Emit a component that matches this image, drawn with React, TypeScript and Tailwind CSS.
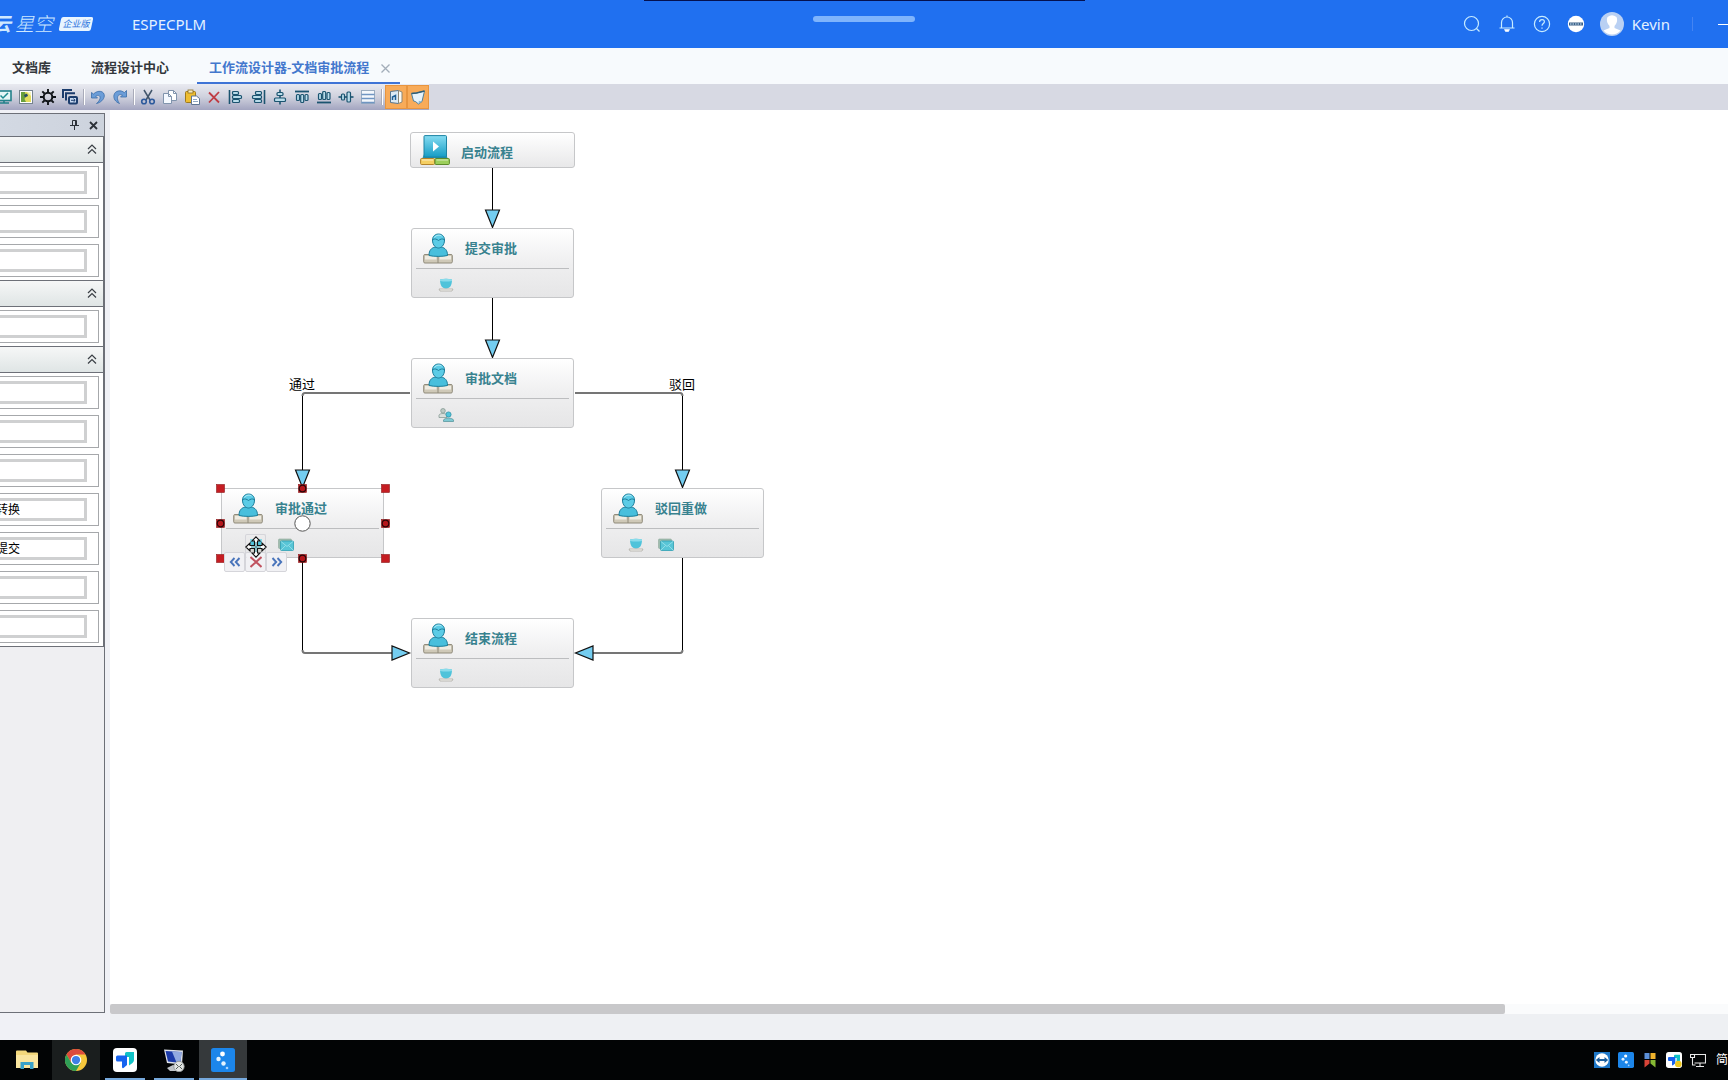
import React from "react";

const INK = "#1b5470";

/* ---------- Toolbar icons (16 x 16) ---------- */

function Icon({ children, size = 16 }: { children: React.ReactNode; size?: number }) {
  return (
    <svg width={size} height={size} viewBox="0 0 16 16" fill="none" aria-hidden="true" className="shrink-0">
      {children}
    </svg>
  );
}

const alignBar = { fill: "#b9dcea", stroke: INK, strokeWidth: 1.2 };

const MonitorIcon = (
  <Icon>
    <rect x="1" y="2" width="14" height="9.5" fill="#e6f6f6" stroke="#23818a" strokeWidth="1.6" />
    <path d="M4.5 6.5l2.5 2.5 5-5" stroke="#1d8b90" strokeWidth="1.5" />
    <path d="M3 14h10M8 11.5V14" stroke="#23818a" strokeWidth="1.6" />
  </Icon>
);
const MapIcon = (
  <Icon>
    <rect x="1.5" y="1.5" width="13" height="13" fill="#fff" stroke="#75838f" />
    <path d="M3 3h10v10H3z" fill="#e3dc5c" />
    <path d="M3 3h4l1 4-1.500 3L8 13H3z" fill="#6a9f3c" />
    <path d="M9 3h4v4z" fill="#f5f3c0" />
    <path d="M6 6l3-1.500 1 2.500-3 1.500z" fill="#284a68" />
  </Icon>
);
const GearIcon = (
  <Icon>
    <circle cx="8" cy="8" r="4.3" stroke="#101418" strokeWidth="2" />
    <path
      d="M8 0v3M8 13v3M0 8h3M13 8h3M2.3 2.3l2.2 2.2M11.5 11.5l2.2 2.2M2.3 13.7l2.2-2.2M11.5 4.5l2.2-2.2"
      stroke="#101418"
      strokeWidth="1.9"
    />
  </Icon>
);
const CascadeIcon = (
  <Icon>
    <path d="M1 9V1h9M4 11.5V4.200h9" stroke="#1c3d6d" strokeWidth="2" />
    <rect x="7" y="8" width="8" height="6.500" rx="1" fill="#c7d9f1" stroke="#1c3d6d" strokeWidth="2" />
    <path d="M9 11.300h4M11.500 9.700l1.700 1.600-1.700 1.600" stroke="#1c3d6d" />
  </Icon>
);
const UndoIcon = (
  <Icon>
    <path
      d="M1.500 3.500v5.500h6L5.700 7.200c2.500-1.700 5-.7 4.300 2.300-.4 2-1.700 3.500-3.500 5 4-.8 7.500-4 7.800-7.500C14.600 2 8 .5 3.500 5z"
      fill="#6b9dd8"
      stroke="#3b6da8"
      strokeWidth=".8"
    />
  </Icon>
);
const RedoIcon = (
  <Icon>
    <path
      d="M14.500 1.500V8h-6l2-2c-3-1.200-5.200.2-5 3.500.1 2 .8 3.500 2 5C3.500 13 1.200 9.500 2 6c1-4.500 7-5.500 10.300-2.300z"
      fill="#6b9dd8"
      stroke="#3b6da8"
      strokeWidth=".8"
    />
  </Icon>
);
const CutIcon = (
  <Icon>
    <path d="M4 1l6 10M12 1L6 11" stroke="#42566b" strokeWidth="1.500" />
    <circle cx="4" cy="12.500" r="2.300" stroke="#2d5a9c" strokeWidth="1.600" />
    <circle cx="12" cy="12.500" r="2.300" stroke="#2d5a9c" strokeWidth="1.600" />
  </Icon>
);
const CopyIcon = (
  <Icon>
    <path d="M6.500 1.500h5l3 3v7h-8z" fill="#fff" stroke="#8194ad" />
    <path d="M1.500 4.500h5l3 3v7h-8z" fill="#f5f9ff" stroke="#8194ad" />
    <path d="M6.500 4.500v3h3M11.500 1.500v3h3" stroke="#8194ad" />
  </Icon>
);
const PasteIcon = (
  <Icon>
    <rect x="1.500" y="2.500" width="10" height="11" rx="1" fill="#eebd31" stroke="#9f7a1d" />
    <rect x="4" y="1" width="5" height="3" fill="#f6ecc0" stroke="#8a6d20" strokeWidth=".8" />
    <path d="M7.500 7h5l3 2.500v6h-8z" fill="#fff" stroke="#5f7694" />
    <path d="M9 10.500h4M9 12.500h5" stroke="#90a8c4" />
  </Icon>
);
const DeleteIcon = (
  <Icon>
    <path d="M3 3.500l10 10M13 3L3 13.500" stroke="#bf3b43" strokeWidth="1.800" />
  </Icon>
);
const AlignLeftIcon = (
  <Icon>
    <path d="M1.500 1v14" stroke={INK} strokeWidth="1.600" />
    <rect x="4.500" y="2.500" width="6" height="3" rx="1" {...alignBar} />
    <rect x="4.500" y="6.500" width="9" height="3" rx="1" {...alignBar} />
    <rect x="4.500" y="10.500" width="7" height="3" rx="1" {...alignBar} />
  </Icon>
);
const AlignRightIcon = (
  <Icon>
    <path d="M14.500 1v14" stroke={INK} strokeWidth="1.600" />
    <rect x="5.500" y="2.500" width="6" height="3" rx="1" {...alignBar} />
    <rect x="2.500" y="6.500" width="9" height="3" rx="1" {...alignBar} />
    <rect x="4.500" y="10.500" width="7" height="3" rx="1" {...alignBar} />
  </Icon>
);
const AlignCenterIcon = (
  <Icon>
    <path d="M8 .5v15" stroke={INK} strokeWidth="1.600" />
    <rect x="5" y="3.500" width="6" height="3" rx="1" {...alignBar} />
    <rect x="2.500" y="9" width="11" height="3.500" rx="1" {...alignBar} />
  </Icon>
);
const AlignTopIcon = (
  <Icon>
    <path d="M1 2.500h14" stroke={INK} strokeWidth="1.800" />
    <rect x="2.500" y="5.500" width="3" height="6" rx="1" {...alignBar} />
    <rect x="6.700" y="5.500" width="3" height="8" rx="1" {...alignBar} />
    <rect x="11" y="5.500" width="3" height="6" rx="1" {...alignBar} />
  </Icon>
);
const AlignBottomIcon = (
  <Icon>
    <path d="M1 13.500h14" stroke={INK} strokeWidth="1.800" />
    <rect x="2.500" y="4.500" width="3" height="6" rx="1" {...alignBar} />
    <rect x="6.700" y="2.500" width="3" height="8" rx="1" {...alignBar} />
    <rect x="11" y="3.500" width="3" height="7" rx="1" {...alignBar} />
  </Icon>
);
const AlignMiddleIcon = (
  <Icon>
    <path d="M.5 8h15" stroke={INK} strokeWidth="1.600" />
    <rect x="3.500" y="5" width="3" height="6" rx="1" {...alignBar} />
    <rect x="9" y="3" width="3.500" height="10" rx="1" {...alignBar} />
  </Icon>
);
const ListIcon = (
  <Icon>
    <rect x="1.500" y="1.500" width="13" height="13" fill="#f4f8fc" stroke="#9aacc0" />
    <path d="M1.500 5.500h13M1.500 9.500h13M1.500 13.500h13" stroke="#6f95c2" strokeWidth="1.400" />
  </Icon>
);
const RulerIcon = (
  <Icon>
    <path d="M2.500 2.500l8-1v13l-8-1z" fill="#dceaf4" stroke="#56758f" />
    <path d="M10.500 1.500l3.500 1.500v10l-3.500 1.500z" fill="#fbfbf7" stroke="#8b8676" />
    <path d="M4.500 11V8l3-1.500V11" stroke="#1f5f95" strokeWidth="1.500" />
  </Icon>
);
const NoteIcon = (
  <Icon>
    <path d="M1.500 4.500l5-.5 8-2-2.500 10.500-3.500 2.500-3-2.500-2-.5z" fill="#e6f3fb" stroke="#4d7f9c" />
    <path d="M1.500 4.500l5-.5 8-2" stroke="#2f5f78" strokeWidth="1.400" />
    <path d="M8.500 15l.3-3.200 3.200.7z" fill="#8cb8d0" />
  </Icon>
);

type Tool = { label: string; icon: React.ReactNode; on?: boolean };
const toolGroups: Tool[][] = [
  [
    { label: "预览", icon: MonitorIcon },
    { label: "导航图", icon: MapIcon },
    { label: "设置", icon: GearIcon },
    { label: "层叠", icon: CascadeIcon },
  ],
  [
    { label: "撤销", icon: UndoIcon },
    { label: "重做", icon: RedoIcon },
  ],
  [
    { label: "剪切", icon: CutIcon },
    { label: "复制", icon: CopyIcon },
    { label: "粘贴", icon: PasteIcon },
    { label: "删除", icon: DeleteIcon },
    { label: "左对齐", icon: AlignLeftIcon },
    { label: "右对齐", icon: AlignRightIcon },
    { label: "水平居中", icon: AlignCenterIcon },
    { label: "顶端对齐", icon: AlignTopIcon },
    { label: "底端对齐", icon: AlignBottomIcon },
    { label: "垂直居中", icon: AlignMiddleIcon },
    { label: "列表", icon: ListIcon },
  ],
  [
    { label: "标尺", icon: RulerIcon, on: true },
    { label: "便签", icon: NoteIcon, on: true },
  ],
];

/* ---------- Header ---------- */

function Header() {
  return (
    <header className="relative flex h-12 shrink-0 items-center justify-between overflow-hidden bg-[#2070f0] text-white">
      <div className="absolute inset-x-0 top-0 flex flex-col items-center">
        <div className="h-px w-[441px] bg-[#04104f]" />
        <div className="mt-[15px] h-1.5 w-[102px] rounded-full bg-[#7fb4fc]" />
      </div>
      <div className="flex items-center">
        <div className="-ml-[8px] flex items-center gap-0.5 text-[#cfe9ff] italic">
          <span className="text-[19px] leading-6 font-bold">云</span>
          <span className="ml-0.5 text-[19px] leading-6 font-light">星空</span>
        </div>
        <div className="relative ml-[7px] flex h-3.5 w-[32px] items-center justify-center">
          <span className="absolute inset-0 -skew-x-12 rounded-[2px] bg-[#e9f5ff]" />
          <span className="relative text-[9px] leading-3 whitespace-nowrap text-[#2f74dd] italic">企业版</span>
        </div>
        <span className="ml-10 text-[15px] leading-5 text-[#e4f2ff]">ESPECPLM</span>
      </div>
      <div className="flex items-center text-[#c8ecff]">
        <button aria-label="搜索" className="flex w-[34px] justify-center">
          <svg width="18" height="18" viewBox="0 0 18 18" fill="none" stroke="currentColor" strokeWidth="1.200">
            <circle cx="8.500" cy="8.500" r="7" />
            <path d="M13.500 13.500l3 3" />
          </svg>
        </button>
        <button aria-label="通知" className="flex w-9 justify-center">
          <svg width="18" height="18" viewBox="0 0 18 18" fill="none" stroke="currentColor" strokeWidth="1.200">
            <path d="M1.500 13h15M3.500 13V7.500a5.500 5.500 0 0 1 11 0V13M9 .5V2" />
            <path d="M6.500 14.500h5l-1 2h-3z" fill="#fff" stroke="#fff" strokeWidth=".6" />
          </svg>
        </button>
        <button aria-label="帮助" className="flex w-[34px] justify-center">
          <svg width="18" height="18" viewBox="0 0 18 18" fill="none" stroke="currentColor" strokeWidth="1.200">
            <circle cx="9" cy="9" r="7.600" />
            <path d="M6.600 7c0-3.200 4.800-3.200 4.800-.3 0 1.800-2.400 1.800-2.400 4M9 12.400v1.400" />
          </svg>
        </button>
        <button aria-label="更多" className="flex w-[34px] justify-center">
          <svg width="18" height="18" viewBox="0 0 18 18">
            <circle cx="9" cy="9" r="8.200" fill="#fff" />
            <path d="M2 9h14" stroke="#3a5f86" strokeWidth="3" />
            <path d="M3 9h12" stroke="#d6f0ff" strokeWidth="1.200" strokeDasharray="1.500 1" />
          </svg>
        </button>
        <button className="ml-[7px] flex items-center gap-2">
          <svg width="24" height="24" viewBox="0 0 24 24">
            <circle cx="12" cy="12" r="12" fill="#b9d0f3" />
            <path d="M7.500 5q4.500-3.500 9 0 1.500 3.500-.5 7l-1.500 2v2l6 2.500a11 11 0 0 1-17 0l6-2.500v-2L8 12q-2-3.500-.5-7z" fill="#fff" />
          </svg>
          <span className="text-[15px] leading-5 text-[#e4f2ff]">Kevin</span>
        </button>
        <span className="ml-[22px] h-3.5 w-px bg-[#4484f2]" />
        <button aria-label="最小化" className="ml-[25px] flex h-3 w-2.5 items-center overflow-hidden">
          <span className="h-px w-2.5 bg-white" />
        </button>
      </div>
    </header>
  );
}

/* ---------- Tabs ---------- */

function Tabs() {
  return (
    <nav className="flex h-9 shrink-0 items-stretch bg-[#f7fafd] text-[13px] font-semibold text-[#33373c]">
      <a href="#library" className="ml-3 flex items-center pt-1">
        文档库
      </a>
      <a href="#center" className="ml-10 flex items-center pt-1">
        流程设计中心
      </a>
      <div className="ml-7 flex items-center gap-3 border-b-2 border-[#3f74d6] pt-1.5 pr-2.5 pl-3 text-[#4377cd]">
        <a href="#designer">工作流设计器-文档审批流程</a>
        <button aria-label="关闭标签" className="text-[#a3adb9]">
          <svg width="9" height="9" viewBox="0 0 9 9" stroke="currentColor" strokeWidth="1.300">
            <path d="M.5.500l8 8M8.500.500l-8 8" />
          </svg>
        </button>
      </div>
    </nav>
  );
}

/* ---------- Toolbar ---------- */

function Toolbar() {
  return (
    <div role="toolbar" aria-label="设计工具" className="flex h-[26px] shrink-0 overflow-hidden bg-[#d7d9e3]">
      <div className="-ml-[7px] flex items-center bg-linear-to-b from-[#e9eaf0] via-[#cfd1dd] to-[#a3a5c0]">
        {toolGroups.map((group, g) => (
          <React.Fragment key={g}>
            {g > 0 && (
              <span className="flex w-1.5 justify-center">
                <span className="h-4 w-0.5 border-r border-white bg-[#a9abb9]" />
              </span>
            )}
            {group.map((tool) => (
              <button
                key={tool.label}
                aria-label={tool.label}
                className={
                  tool.on
                    ? "flex h-6 w-[22px] items-center justify-center border border-[#e8953f] bg-[#f8ab59]"
                    : "flex h-6 w-[22px] items-center justify-center"
                }
              >
                {tool.icon}
              </button>
            ))}
          </React.Fragment>
        ))}
      </div>
    </div>
  );
}

/* ---------- Left palette ---------- */

const sections: { id: string; items: string[] }[] = [
  { id: "基本", items: ["", "", ""] },
  { id: "连接", items: [""] },
  { id: "活动", items: ["", "", "", "转换", "提交", "", ""] },
];

function Palette() {
  return (
    <aside className="mt-[3px] mb-[27px] flex w-[105px] shrink-0 flex-col border-t border-r border-b border-[#6d7078] bg-[#efeff2]">
      <div className="flex h-[22px] items-center justify-end gap-2.5 bg-linear-to-r from-[#d3d9e3] to-[#cdd3dd] pr-1.5 text-[#2c3138]">
        <button aria-label="固定">
          <svg width="9" height="10" viewBox="0 0 9 10" fill="none" stroke="currentColor">
            <path d="M2.500 5.500v-5h4v5M0 5.500h9M4.500 5.500V10M5.500.500v5" />
          </svg>
        </button>
        <button aria-label="关闭面板">
          <svg width="9" height="9" viewBox="0 0 9 9" stroke="currentColor" strokeWidth="1.800">
            <path d="M1 1l7 7M8 1L1 8" />
          </svg>
        </button>
      </div>
      <div className="border-r border-b border-[#6d7078] bg-white">
        {sections.map((section) => (
          <section key={section.id}>
            <button
              aria-label={section.id}
              className="flex h-[27px] w-full items-center justify-end border-y border-[#6d7078] bg-linear-to-b from-[#f6f7f7] to-[#dfe5e5] pr-1.5 pb-0.5 text-[#3a3f45]"
            >
              <svg width="10" height="10" viewBox="0 0 10 10" fill="none" stroke="currentColor" strokeWidth="1.200">
                <path d="M1 5l4-4 4 4M1 9.500l4-4 4 4" />
              </svg>
            </button>
            <ul className="flex flex-col gap-1.5 py-[3px] pr-1">
              {section.items.map((item, i) => (
                <li key={i} className="border-y border-r border-[#a6a8ab] py-1 pr-[11px]">
                  <button
                    aria-label={item || "节点"}
                    className="flex h-[23px] w-full items-center overflow-hidden border-y-[3px] border-r-[3px] border-[#cfd0d1] text-xs text-black"
                  >
                    <span className="-ml-1">{item}</span>
                  </button>
                </li>
              ))}
            </ul>
          </section>
        ))}
      </div>
    </aside>
  );
}

/* ---------- Diagram ---------- */

function PersonIcon() {
  return (
    <svg width="30" height="32" viewBox="0 0 30 32" aria-hidden="true" className="shrink-0">
      <rect x=".7" y="21.500" width="28.600" height="8.500" rx="1.200" fill="#cfc9b8" stroke="#8f8a7a" />
      <path d="M2 23h11.500v3.500H2zM16.500 23h11.500v3.500H16.500z" fill="#efece2" />
      <path d="M15 22v8" stroke="#8f8a7a" />
      <path d="M6 22.500c0-5.500 2.500-7.500 6-8.500h6.500c3.500 1 6 3 6 8.500-5 1.200-13.500 1.200-18.500 0z" fill="#48bfdc" stroke="#1b7d9a" />
      <path d="M9.500 7c0-8 12-8 12 0 0 5.500-3.500 8-6 8s-6-2.500-6-8z" fill="#5ccce6" stroke="#1b7d9a" />
      <path d="M9.700 6.500c2-1 4-.5 5.800 1 1.800-1.500 3.800-2 5.800-1" fill="none" stroke="#1b7d9a" />
      <path d="M11.500 4.500c1.500-2.500 5-3 7-1.500" stroke="#bdf0fa" fill="none" />
    </svg>
  );
}

function StartIcon() {
  return (
    <svg width="30" height="30" viewBox="0 0 30 30" aria-hidden="true" className="shrink-0">
      <defs>
        <linearGradient id="screen" x1="0" y1="0" x2="0" y2="1">
          <stop offset="0" stopColor="#86dcf2" />
          <stop offset="1" stopColor="#149cc4" />
        </linearGradient>
      </defs>
      <path d="M2.500 23l2-5h21l2 5z" fill="#2391ae" />
      <rect x="4" y=".6" width="22.500" height="21.500" rx="1" fill="url(#screen)" stroke="#1d83a3" />
      <path d="M13 6.500l6 5-6 5z" fill="#fff" />
      <rect x=".600" y="23.500" width="14" height="6" rx="1" fill="#f5cf62" stroke="#b3832a" />
      <rect x="15" y="23.500" width="14.400" height="6" rx="1" fill="#9ccf5a" stroke="#5d8b2b" />
      <path d="M2 25h11M16.500 25h11.500" stroke="#fff" strokeOpacity=".6" />
    </svg>
  );
}

function CupIcon() {
  return (
    <svg width="16" height="14" viewBox="0 0 16 14" aria-hidden="true">
      <path d="M2 1.500c4-1 8-1 12 0 0 5-1.500 9-6 9S2 6.500 2 1.500z" fill="#4fc3da" />
      <path d="M2 1.500c4-1 8-1 12 0v1.500c-4 .8-8 .8-12 0z" fill="#8adceb" />
      <path d="M1 11h14l-1 2H2z" fill="#f3f3f0" stroke="#a7a59c" strokeWidth=".7" />
    </svg>
  );
}

function MailIcon() {
  return (
    <svg width="16" height="14" viewBox="0 0 16 14" aria-hidden="true">
      <rect x=".5" y="1" width="13" height="9.500" rx="1" fill="#9dbcae" stroke="#8fa79b" strokeWidth=".6" />
      <rect x="2.500" y="3" width="13" height="9.500" rx="1" fill="#58c5d6" stroke="#2f9fb3" strokeWidth=".8" />
      <path d="M3 3.500l6 5 6-5M3 12l4.500-4.500M15 12l-4.500-4.500" fill="none" stroke="#9fe3ec" strokeWidth=".8" />
    </svg>
  );
}

function GroupIcon() {
  return (
    <svg width="16" height="14" viewBox="0 0 16 14" aria-hidden="true">
      <circle cx="5" cy="2.800" r="2.300" fill="#bcc9c4" stroke="#7d948d" strokeWidth=".7" />
      <path d="M1 9.500V7c1-2 7-2 8 0v2.500z" fill="#d9dfdc" stroke="#7d948d" strokeWidth=".7" />
      <circle cx="10.500" cy="6.500" r="2.600" fill="#52c4da" stroke="#2a8ba0" strokeWidth=".7" />
      <path d="M5.500 13.500V12c1-2.500 9-2.500 10 0v1.500z" fill="#7fc9d3" stroke="#4f8f97" strokeWidth=".7" />
    </svg>
  );
}

type FlowNode = { title: string; place: string; badges: React.ReactNode[] };

const nodes: FlowNode[] = [
  { title: "提交审批", place: "absolute left-[301px] top-[118px]", badges: [<CupIcon key="c" />] },
  { title: "审批文档", place: "absolute left-[301px] top-[248px]", badges: [<GroupIcon key="g" />] },
  { title: "审批通过", place: "absolute left-[111px] top-[378px]", badges: [<CupIcon key="c" />, <MailIcon key="m" />] },
  { title: "驳回重做", place: "absolute left-[491px] top-[378px]", badges: [<CupIcon key="c" />, <MailIcon key="m" />] },
  { title: "结束流程", place: "absolute left-[301px] top-[508px]", badges: [<CupIcon key="c" />] },
];

function NodeCard({ node }: { node: FlowNode }) {
  return (
    <div className={node.place}>
      <div className="w-[163px] rounded-[3px] border border-[#c6c7c9] bg-linear-to-b from-white via-[#efeff0] to-[#e6e6e7]">
        <div className="mx-1 flex h-10 items-center gap-3 border-b border-[#bcbdbf] pl-[7px] text-[13px] font-semibold text-[#38828f]">
          <PersonIcon />
          {node.title}
        </div>
        <div className="flex h-7 items-center gap-3.5 pt-1 pl-[26px]">{node.badges}</div>
      </div>
    </div>
  );
}

function Connectors() {
  const arrow = { fill: "#74cdf0", stroke: "#111", strokeWidth: 1.2 };
  return (
    <svg width="700" height="600" className="absolute top-0 left-0" fill="none" aria-hidden="true">
      <g stroke="#000">
        <path d="M382.500 58v42M382.500 188v42" />
        <path d="M192.500 360V286M572.500 360V286M192.500 448v92M572.500 448v92" />
      </g>
      <g stroke="#757575" strokeWidth="2">
        <path d="M300 283H195q-2.500 0-2.500 3M465 283h105q2.500 0 2.500 3" />
        <path d="M192.500 540q0 3 2.500 3h87M572.500 540q0 3-2.500 3h-87" />
      </g>
      <path d="M375.500 100h14l-7 17.500z" {...arrow} />
      <path d="M375.500 230h14l-7 17.500z" {...arrow} />
      <path d="M185.500 360h14l-7 17.500z" {...arrow} />
      <path d="M565.500 360h14l-7 17.500z" {...arrow} />
      <path d="M282 536v14l17.500-7z" {...arrow} />
      <path d="M483 536v14l-17.500-7z" {...arrow} />
    </svg>
  );
}

function Selection() {
  const xs = [6, 88, 171];
  const ys = [6, 41, 76];
  return (
    <svg width="178" height="82" className="absolute top-[372px] left-[104px]" aria-hidden="true">
      {xs.map((x, i) =>
        ys.map((y, j) => {
          if (i === 1 && j === 1) {
            return <circle key="mid" cx={x + 0.5} cy={y + 0.5} r="7.700" fill="#fff" stroke="#555" />;
          }
          const edge = i === 1 || j === 1;
          return (
            <g key={`${i}-${j}`}>
              <rect x={x - 3.5} y={y - 3.5} width="8" height="8" fill="#c51d22" stroke="#8c1a1c" strokeWidth=".6" />
              {edge && <circle cx={x + 0.5} cy={y + 0.5} r="3.300" fill="#b5161b" stroke="#2a0608" strokeWidth="1.200" />}
            </g>
          );
        }),
      )}
    </svg>
  );
}

function NodeActions() {
  const cell = "flex h-5 w-[21px] items-center justify-center rounded-[2px] border border-[#d5d5da] bg-[#f1f1f4]";
  return (
    <div className="absolute top-[424px] left-[114px]">
      <div className="flex flex-col">
        <div className="relative z-10 flex justify-center">
          <button
            aria-label="移动"
            className="flex h-6 w-[21px] items-center justify-center rounded-[2px] border border-b-0 border-[#d5d5da]"
          >
            <svg width="22" height="22" viewBox="0 0 22 22" className="shrink-0">
              <path
                d="M11 .800l4 4.200h-2.500v4.500H17V7l4.200 4-4.200 4v-2.500h-4.500V17H15l-4 4.200L7 17h2.500v-4.500H5V15L.800 11 5 7v2.500h4.500V5H7z"
                fill="#fff"
                stroke="#111"
                strokeWidth="1.100"
              />
              <path d="M11 6v10M6 11h10" stroke="#27828f" />
            </svg>
          </button>
        </div>
        <div className="-mt-1.5 flex">
          <button aria-label="上一步" className={cell}>
            <svg width="12" height="12" viewBox="0 0 12 12" fill="none" stroke="#4a75bb" strokeWidth="1.900">
              <path d="M5.500 2L1.800 6l3.700 4M10.500 2L6.800 6l3.700 4" />
            </svg>
          </button>
          <button aria-label="删除节点" className={cell}>
            <svg width="12" height="12" viewBox="0 0 12 12" stroke="#c0525f" strokeWidth="2">
              <path d="M.5 1l11 10M11.500 1l-11 10" />
            </svg>
          </button>
          <button aria-label="下一步" className={cell}>
            <svg width="12" height="12" viewBox="0 0 12 12" fill="none" stroke="#4a75bb" strokeWidth="1.900">
              <path d="M1.500 2l3.700 4-3.700 4M6.500 2l3.700 4-3.700 4" />
            </svg>
          </button>
        </div>
      </div>
    </div>
  );
}

function Canvas() {
  return (
    <section aria-label="流程画布" className="ml-[5px] flex min-w-0 flex-1 flex-col">
      <div className="relative flex-1 bg-white">
        <Connectors />
        <div className="absolute top-[22px] left-[300px]">
          <div className="flex h-9 w-[165px] items-center gap-[11px] rounded-[3px] border border-[#c6c7c9] bg-linear-to-b from-white to-[#e8e8e9] pl-[9px] text-[13px] font-semibold text-[#38828f]">
            <StartIcon />
            <span className="pt-1.5">启动流程</span>
          </div>
        </div>
        {nodes.map((node) => (
          <NodeCard key={node.title} node={node} />
        ))}
        <span className="absolute top-[264px] left-[179px] text-[13px] leading-5 text-black">通过</span>
        <span className="absolute top-[264px] left-[559px] text-[13px] leading-5 text-black">驳回</span>
        <Selection />
        <NodeActions />
      </div>
      <div className="bg-[#fafbfc]">
        <div className="h-2.5 w-[86.2%] rounded-xs bg-[#c8c8ca]" />
      </div>
      <div className="h-[26px] bg-[#eef0f3]" />
    </section>
  );
}

/* ---------- Taskbar ---------- */

function DotsLogo({ size }: { size: number }) {
  return (
    <svg width={size} height={size} viewBox="0 0 24 24" aria-hidden="true">
      <rect width="24" height="24" rx="2.500" fill="#1c86ea" />
      <circle cx="11.500" cy="6" r="2.400" fill="#fff" />
      <circle cx="7.500" cy="11" r="2.200" fill="#e3f3ff" />
      <circle cx="12.500" cy="15.500" r="2.200" fill="#e3f3ff" />
      <circle cx="16" cy="20" r="1.300" fill="#a6d3ff" />
    </svg>
  );
}

function TeamLogo({ size, badge }: { size: number; badge?: boolean }) {
  return (
    <svg width={size} height={size} viewBox="0 0 24 24" aria-hidden="true">
      <rect width="24" height="24" rx="4" fill="#fff" />
      <path d="M12 5.500q0-1.500 1.500-1.500H21v8q0 1.500-1.500 3L16 17.500V9h-4z" fill="#12c3c7" />
      <path d="M3 9q0-1.500 1.500-1.500H14V17l-3.500 3q-1.500.5-1.500-1v-5.500H4.500Q3 13.500 3 12z" fill="#1763ef" />
      {badge && <circle cx="18.500" cy="18" r="5" fill="#edc81f" />}
    </svg>
  );
}

const apps: { name: string; cls: string; icon: React.ReactNode }[] = [
  {
    name: "文件资源管理器",
    cls: "flex w-12 items-center justify-center",
    icon: (
      <svg width="22" height="20" viewBox="0 0 22 20">
        <path d="M0 1.500Q0 .5 1 .5h9l1.500 2H21q1 0 1 1V18H0z" fill="#f3d87c" />
        <path d="M0 5h22v13H0z" fill="#fae6a0" />
        <path d="M4.500 19v-7h13v7h-3.500v-4h-6v4z" fill="#3aa2c9" />
      </svg>
    ),
  },
  {
    name: "Chrome",
    cls: "flex w-12 items-center justify-center bg-[#1a1e1e]",
    icon: (
      <svg width="22" height="22" viewBox="0 0 24 24">
        <circle cx="12" cy="12" r="12" fill="#f6c73b" />
        <path d="M1.600 6a12 12 0 0 1 20.800 0H12L6.800 15z" fill="#dd4b3c" />
        <path d="M1.600 6A12 12 0 0 0 12 24l5.200-9H6.800z" fill="#2f9f57" />
        <circle cx="12" cy="12" r="5.800" fill="#fff" />
        <circle cx="12" cy="12" r="4.500" fill="#3f7fe6" />
      </svg>
    ),
  },
  {
    name: "ToDesk",
    cls: "mx-1 flex w-10 items-center justify-center border-b-2 border-[#76a9dc] pt-0.5",
    icon: <TeamLogo size={24} />,
  },
  {
    name: "远程桌面",
    cls: "mx-1 flex w-10 items-center justify-center border-b-2 border-[#76a9dc] pt-0.5",
    icon: (
      <svg width="24" height="24" viewBox="0 0 24 24">
        <path d="M2 1.500l19 1-1 14-15-1.500z" fill="#dfe3ea" />
        <path d="M3.500 3l16 1-1 11-12.500-1.500z" fill="#1b3aa8" />
        <path d="M10 3.400l9.500.6-1 11-4-.5z" fill="#91a9e0" />
        <path d="M5 20l6-3 5 1-1 5H8z" fill="#bfc3c8" />
        <circle cx="17" cy="18.500" r="5.200" fill="#e2e4e3" stroke="#8c9090" strokeWidth=".8" />
        <path d="M14 16l2.500 2.500L14 21M20 16l-2.500 2.500L20 21" fill="none" stroke="#55605c" />
      </svg>
    ),
  },
  {
    name: "金蝶云星空",
    cls: "flex w-12 items-center justify-center border-b-2 border-[#76a9dc] bg-[#35393b] pt-0.5",
    icon: <DotsLogo size={24} />,
  },
];

function Taskbar() {
  return (
    <footer className="flex h-10 shrink-0 justify-between overflow-hidden bg-[#020405]">
      <div className="ml-[3px] flex gap-px">
        {apps.map((app) => (
          <button key={app.name} aria-label={app.name} className={app.cls}>
            {app.icon}
          </button>
        ))}
      </div>
      <div className="flex items-center gap-2 text-white">
        <svg width="16" height="16" viewBox="0 0 16 16" aria-hidden="true">
          <rect width="16" height="16" fill="#1f78c8" />
          <circle cx="8" cy="8" r="6.700" fill="#fff" />
          <path d="M1.800 8l3.700-3v2h5V5l3.700 3-3.700 3V9h-5v2z" fill="#1c5f9e" />
        </svg>
        <DotsLogo size={16} />
        <svg width="16" height="16" viewBox="0 0 16 16" aria-hidden="true">
          <path d="M2.500 1h5v6h-5z" fill="#5b8fd8" />
          <path d="M8.500 1h5v6h-5z" fill="#f0b32c" />
          <path d="M2.500 8h5v3.500l-5 4z" fill="#d84438" />
          <path d="M8.500 8h5v7.500l-5-4z" fill="#86b934" />
        </svg>
        <TeamLogo size={16} badge />
        <svg width="16" height="16" viewBox="0 0 16 16" fill="none" stroke="#e8e8e8" strokeWidth="1.100" aria-hidden="true">
          <path d="M4.500 2.500h11v8.500H4.500M10 11v3M6 14.500h8" />
          <path d="M.5 2.500h4v3h-4zM2.500 5.500V13h3" />
        </svg>
        <span className="ml-0.5 w-3 text-xs whitespace-nowrap">简</span>
      </div>
    </footer>
  );
}

export default function App() {
  return (
    <div className="flex min-h-screen flex-col overflow-hidden bg-[#f0f1f6] font-['Noto_Sans','Noto_Sans_CJK_SC',sans-serif]">
      <Header />
      <Tabs />
      <Toolbar />
      <main className="flex flex-1">
        <Palette />
        <Canvas />
      </main>
      <Taskbar />
    </div>
  );
}
